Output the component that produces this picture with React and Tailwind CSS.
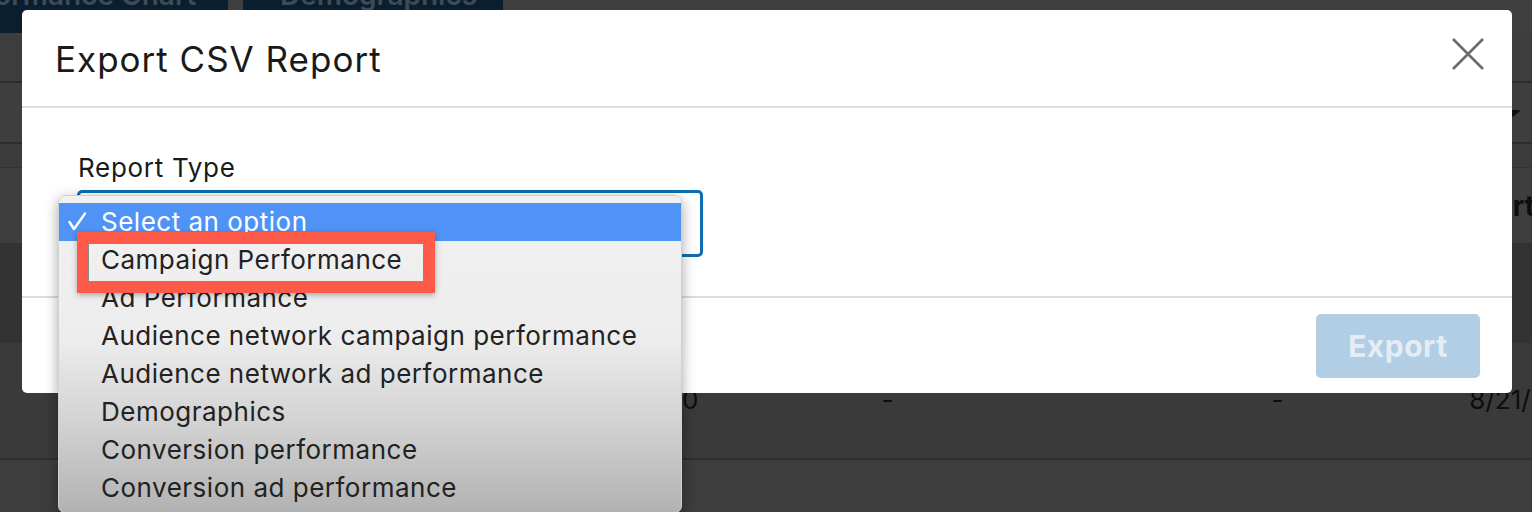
import React from "react";

const items = [
  "Campaign Performance",
  "Ad Performance",
  "Audience network campaign performance",
  "Audience network ad performance",
  "Demographics",
  "Conversion performance",
  "Conversion ad performance",
];

export default function App() {
  return (
    <div className="relative w-[1532px] h-[512px] overflow-hidden bg-[#3d3d3d] font-['Inter',sans-serif]">
      {/* Background page (dimmed) */}
      <div className="flex flex-col">
        <div className="flex h-[33px] bg-[#3f3f3f]">
          <div className="w-[228px] bg-[#0a1e2e] overflow-hidden">
            <div className="mt-[-22px] ml-[-62px] whitespace-nowrap text-[28px] font-semibold leading-[34px] text-[#3c4c5a]">
              Performance Chart
            </div>
          </div>
          <div className="w-[15px]" />
          <div className="w-[260px] bg-[#0a1e2e] overflow-hidden">
            <div className="mt-[-22px] pl-[37px] whitespace-nowrap text-[28px] font-semibold leading-[34px] text-[#3c4c5a]">
              Demographics
            </div>
          </div>
          <div className="flex-1" />
        </div>
        <div className="h-[50px] bg-[#3d3d3d] border-b-2 border-[#2c2c2c]" />
        <div className="h-[61px] bg-[#3e3e3e] border-b-2 border-[#2c2c2c] flex justify-end pr-[11px] pt-[27px]">
          <div className="w-0 h-0 border-l-[8px] border-r-[8px] border-t-[7px] border-l-transparent border-r-transparent border-t-[#111]" />
        </div>
        <div className="h-[24px] bg-[#3b3b3b] border-b border-[#333]" />
        <div className="h-[75px] bg-[#3e3e3e] flex justify-end items-center overflow-hidden">
          <span className="mr-[-3px] text-[28px] font-bold text-[#0d0d0d]">Start</span>
        </div>
        <div className="h-[100px] bg-[#333333]" />
        <div className="h-[117px] bg-[#3a3a3a] border-b-2 border-[#2e2e2e] relative">
          <div className="flex items-center h-[118px] pb-[6px] text-[26px] text-[#0d0d0d]">
            <span className="ml-[682px]">0</span>
            <span className="ml-[183px]">-</span>
            <span className="ml-[378px]">-</span>
            <span className="ml-[186px] whitespace-nowrap">8/21/2019</span>
          </div>
        </div>
        <div className="flex-1 bg-[#3d3d3d]" />
      </div>

      {/* Modal */}
      <div className="absolute left-[22px] top-[10px] w-[1490px] h-[383px] bg-white rounded-[5px] flex flex-col">
        <div className="h-[98px] border-b-2 border-[#dcdcdc] flex justify-between items-start pl-[33px] pr-[28px] pt-[28px]">
          <div className="mt-[1px] text-[35px] leading-[40px] tracking-[1px] text-[#1a1a1a]">Export CSV Report</div>
          <svg width="32" height="32" viewBox="0 0 32 32">
            <path d="M1 1 L31 31 M31 1 L1 31" stroke="#6b6b6b" strokeWidth="2.6" strokeLinecap="butt" />
          </svg>
        </div>
        <div className="h-[188px] pt-[44px] pl-[55px]">
          <div className="pl-[1px] text-[26px] leading-[32px] tracking-[0.7px] text-[#1a1a1a]">Report Type</div>
          <div className="mt-[6px] w-[626px] h-[67px] border-[3px] border-[#0d6db4] rounded-[5px] bg-white" />
        </div>
        <div className="flex-1 border-t-2 border-[#dcdcdc] flex justify-end pt-[16px] pr-[32px]">
          <div className="w-[164px] h-[64px] rounded-[5px] bg-[#b1cee4] flex items-center justify-center text-[30px] font-bold tracking-[0.5px] text-[#e4edf5]">
            Export
          </div>
        </div>
      </div>

      {/* Native dropdown menu */}
      <div className="absolute left-[58px] top-[195px] w-[624px] h-[318px] rounded-[7px] shadow-[0_4px_14px_rgba(0,0,0,0.35)] border border-[#d0d0d0] bg-[linear-gradient(180deg,#f1f1f1_0%,#ededed_45%,#d2d2d2_72%,#b2b2b2_100%)] pt-[7px] overflow-hidden">
        <div className="h-[38px] bg-[#4e93f5] flex items-center relative">
          <svg width="20" height="20" viewBox="0 0 20 20" className="absolute left-[9px] top-[9px]">
            <path d="M1.5 10 L6 17 L17 1.5" stroke="#ffffff" strokeWidth="2.4" fill="none" strokeLinecap="round" strokeLinejoin="round" />
          </svg>
          <span className="pl-[42px] text-[26px] leading-[38px] tracking-[0.5px] text-white whitespace-nowrap">Select an option</span>
        </div>
        {items.map((t) => (
          <div key={t} className="h-[38px] pl-[42px] text-[26px] leading-[38px] tracking-[0.5px] text-[#222] whitespace-nowrap">
            {t}
          </div>
        ))}
      </div>

      {/* Red annotation box */}
      <div className="absolute left-[77px] top-[232px] w-[358px] h-[61px] border-[11px] border-[#fe5a4a] shadow-[0_2px_6px_rgba(0,0,0,0.3)]">
        <div className="w-full h-full border border-[#8a8a8a]" />
      </div>
    </div>
  );
}
